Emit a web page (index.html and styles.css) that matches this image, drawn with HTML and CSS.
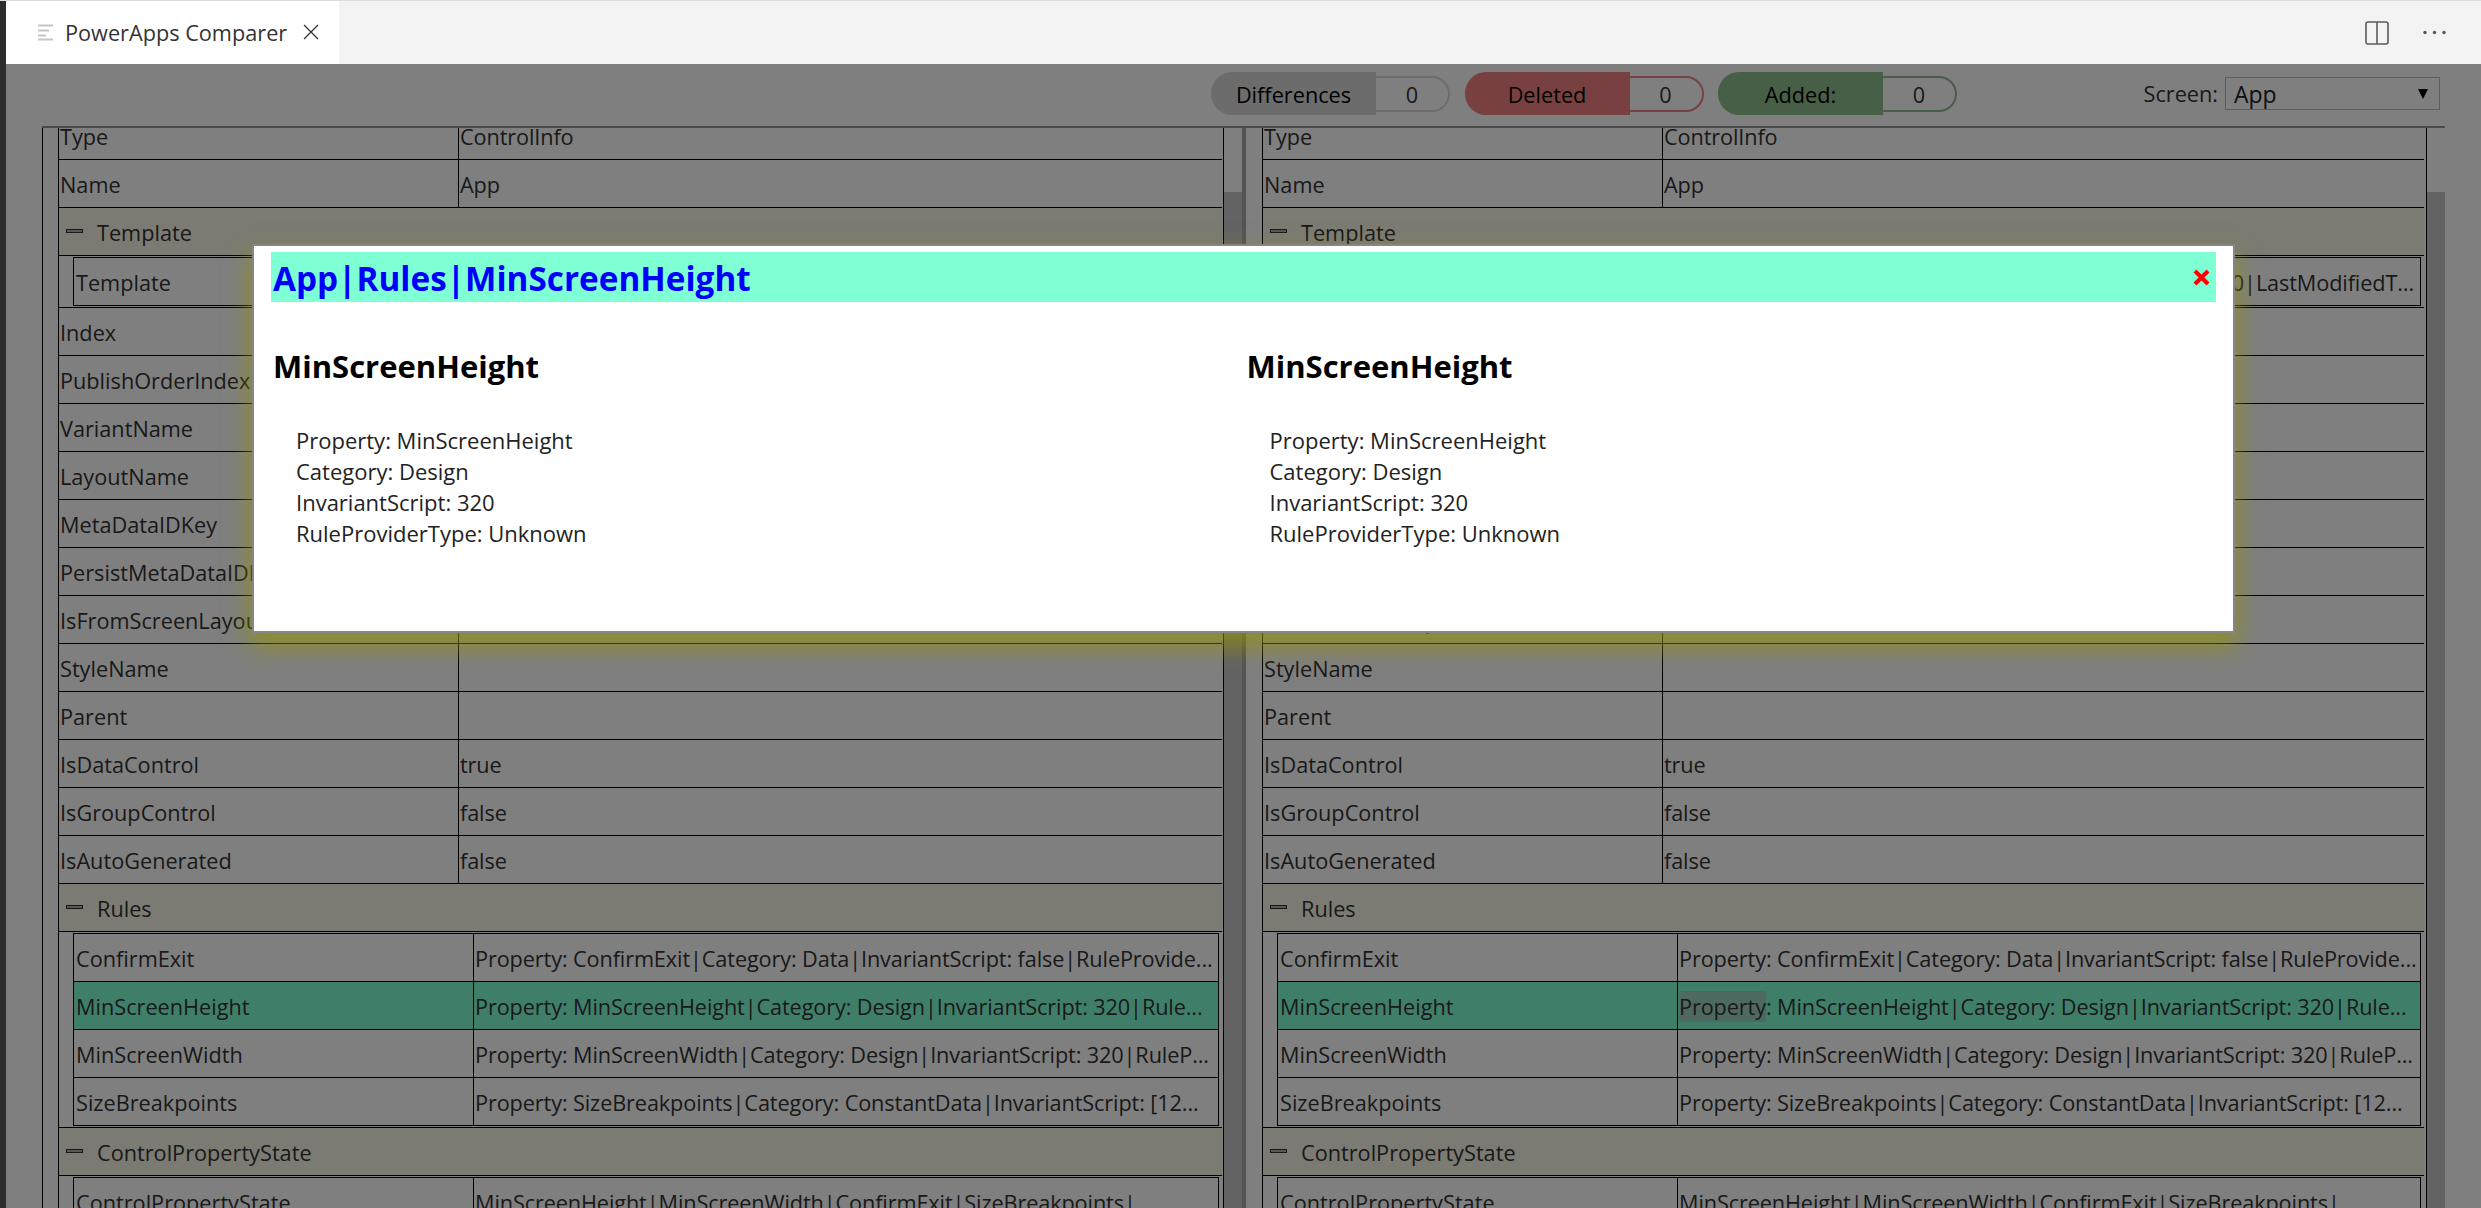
FILE: index.html

```html
<!DOCTYPE html>
<html>
  <head>
    <meta charset="UTF-8">
    <title>PowerApps Comparer</title>
    <link rel="stylesheet" href="styles.css">
  </head>
  <body>
    <div class="activity-bar"></div>
    <div class="editor">
      <div class="tab-bar">
        <div class="tab">
          <svg class="tab-icon" width="16" height="17" viewBox="0 0 16 17">
            <path d="M0 1.5H15M0 6.5H11M0 11.5H8M0 15.5H15" stroke="#c5c5c5" stroke-width="2" fill="none"/>
          </svg>
          <span class="tab-title">PowerApps Comparer</span>
          <svg class="tab-close" width="16" height="16" viewBox="0 0 16 16">
            <path d="M1 1L15 15M15 1L1 15" stroke="#333" stroke-width="1.3" fill="none"/>
          </svg>
        </div>
        <div class="tab-actions">
          <svg width="24" height="24" viewBox="0 0 24 24">
            <rect x="1" y="1" width="22" height="22" rx="2" stroke="#5a5a5a" stroke-width="1.6" fill="none"/>
            <path d="M12 1V23" stroke="#5a5a5a" stroke-width="1.6"/>
          </svg>
          <svg width="23" height="5" viewBox="0 0 23 5">
            <circle cx="2" cy="2.5" r="1.7" fill="#555"/>
            <circle cx="11.5" cy="2.5" r="1.7" fill="#555"/>
            <circle cx="21" cy="2.5" r="1.7" fill="#555"/>
          </svg>
        </div>
      </div>

      <div class="content">
        <div class="toolbar">
          <div class="counter">
            <span class="counter-label grey">Differences</span>
            <span class="counter-value grey">0</span>
          </div>
          <div class="counter">
            <span class="counter-label red">Deleted</span>
            <span class="counter-value red">0</span>
          </div>
          <div class="counter">
            <span class="counter-label green">Added:</span>
            <span class="counter-value green">0</span>
          </div>
          <div class="screen-picker">
            <span>Screen:</span>
            <div class="select">
              <span>App</span>
              <svg width="10" height="10" viewBox="0 0 10 10"><path d="M0 0H10L5 10Z" fill="#000"/></svg>
            </div>
          </div>
        </div>

        <div class="panes">
          <div class="pane">
            <div class="tree">
              <div class="tree-inner">
                <div class="row"><div class="key">Type</div><div class="val">ControlInfo</div></div>
                <div class="row"><div class="key">Name</div><div class="val">App</div></div>
                <div class="group"><i class="minus"></i><span>Template</span></div>
                <div class="nested">
                  <div class="nested-table">
                    <div class="row"><div class="key">Template</div><div class="val"></div></div>
                  </div>
                </div>
                <div class="row"><div class="key">Index</div><div class="val"></div></div>
                <div class="row"><div class="key">PublishOrderIndex</div><div class="val"></div></div>
                <div class="row"><div class="key">VariantName</div><div class="val"></div></div>
                <div class="row"><div class="key">LayoutName</div><div class="val"></div></div>
                <div class="row"><div class="key">MetaDataIDKey</div><div class="val"></div></div>
                <div class="row"><div class="key">PersistMetaDataIDKey</div><div class="val"></div></div>
                <div class="row"><div class="key">IsFromScreenLayout</div><div class="val"></div></div>
                <div class="row"><div class="key">StyleName</div><div class="val"></div></div>
                <div class="row"><div class="key">Parent</div><div class="val"></div></div>
                <div class="row"><div class="key">IsDataControl</div><div class="val">true</div></div>
                <div class="row"><div class="key">IsGroupControl</div><div class="val">false</div></div>
                <div class="row"><div class="key">IsAutoGenerated</div><div class="val">false</div></div>
                <div class="group"><i class="minus"></i><span>Rules</span></div>
                <div class="nested">
                  <div class="nested-table">
                    <div class="row"><div class="key">ConfirmExit</div><div class="val">Property: ConfirmExit|Category: Data|InvariantScript: false|RuleProvide...</div></div>
                    <div class="row active"><div class="key">MinScreenHeight</div><div class="val">Property: MinScreenHeight|Category: Design|InvariantScript: 320|Rule...</div></div>
                    <div class="row"><div class="key">MinScreenWidth</div><div class="val">Property: MinScreenWidth|Category: Design|InvariantScript: 320|RuleP...</div></div>
                    <div class="row"><div class="key">SizeBreakpoints</div><div class="val">Property: SizeBreakpoints|Category: ConstantData|InvariantScript: [12...</div></div>
                  </div>
                </div>
                <div class="group"><i class="minus"></i><span>ControlPropertyState</span></div>
                <div class="nested">
                  <div class="nested-table">
                    <div class="row"><div class="key">ControlPropertyState</div><div class="val">MinScreenHeight|MinScreenWidth|ConfirmExit|SizeBreakpoints|</div></div>
                  </div>
                </div>
              </div>
            </div>
            <div class="scrollbar first"><div class="thumb"></div></div>
          </div>

          <div class="pane second">
            <div class="tree">
              <div class="tree-inner">
                <div class="row"><div class="key">Type</div><div class="val">ControlInfo</div></div>
                <div class="row"><div class="key">Name</div><div class="val">App</div></div>
                <div class="group"><i class="minus"></i><span>Template</span></div>
                <div class="nested">
                  <div class="nested-table">
                    <div class="row"><div class="key">Template</div><div class="val end">0|LastModifiedT...</div></div>
                  </div>
                </div>
                <div class="row"><div class="key">Index</div><div class="val"></div></div>
                <div class="row"><div class="key">PublishOrderIndex</div><div class="val"></div></div>
                <div class="row"><div class="key">VariantName</div><div class="val"></div></div>
                <div class="row"><div class="key">LayoutName</div><div class="val"></div></div>
                <div class="row"><div class="key">MetaDataIDKey</div><div class="val"></div></div>
                <div class="row"><div class="key">PersistMetaDataIDKey</div><div class="val"></div></div>
                <div class="row"><div class="key">IsFromScreenLayout</div><div class="val"></div></div>
                <div class="row"><div class="key">StyleName</div><div class="val"></div></div>
                <div class="row"><div class="key">Parent</div><div class="val"></div></div>
                <div class="row"><div class="key">IsDataControl</div><div class="val">true</div></div>
                <div class="row"><div class="key">IsGroupControl</div><div class="val">false</div></div>
                <div class="row"><div class="key">IsAutoGenerated</div><div class="val">false</div></div>
                <div class="group"><i class="minus"></i><span>Rules</span></div>
                <div class="nested">
                  <div class="nested-table">
                    <div class="row"><div class="key">ConfirmExit</div><div class="val">Property: ConfirmExit|Category: Data|InvariantScript: false|RuleProvide...</div></div>
                    <div class="row active"><div class="key">MinScreenHeight</div><div class="val"><span class="word">Property</span>: MinScreenHeight|Category: Design|InvariantScript: 320|Rule...</div></div>
                    <div class="row"><div class="key">MinScreenWidth</div><div class="val">Property: MinScreenWidth|Category: Design|InvariantScript: 320|RuleP...</div></div>
                    <div class="row"><div class="key">SizeBreakpoints</div><div class="val">Property: SizeBreakpoints|Category: ConstantData|InvariantScript: [12...</div></div>
                  </div>
                </div>
                <div class="group"><i class="minus"></i><span>ControlPropertyState</span></div>
                <div class="nested">
                  <div class="nested-table">
                    <div class="row"><div class="key">ControlPropertyState</div><div class="val">MinScreenHeight|MinScreenWidth|ConfirmExit|SizeBreakpoints|</div></div>
                  </div>
                </div>
              </div>
            </div>
            <div class="scrollbar"><div class="thumb"></div></div>
          </div>
        </div>
      </div>

      <div class="overlay">
        <div class="modal">
          <div class="modal-header">
            <h1>App|Rules|MinScreenHeight</h1>
            <svg width="17" height="17" viewBox="0 0 17 17">
              <path d="M2 2L15 15M15 2L2 15" stroke="#ff0000" stroke-width="4" fill="none"/>
            </svg>
          </div>
          <div class="modal-body">
            <div class="detail">
              <h2>MinScreenHeight</h2>
              <p>Property: MinScreenHeight</p>
              <p>Category: Design</p>
              <p>InvariantScript: 320</p>
              <p>RuleProviderType: Unknown</p>
            </div>
            <div class="detail">
              <h2>MinScreenHeight</h2>
              <p>Property: MinScreenHeight</p>
              <p>Category: Design</p>
              <p>InvariantScript: 320</p>
              <p>RuleProviderType: Unknown</p>
            </div>
          </div>
        </div>
      </div>
    </div>
  </body>
</html>
```

FILE: styles.css

```css
* {
  box-sizing: border-box;
}

html, body {
  height: 100%;
}

body {
  margin: 0;
  display: flex;
  overflow: hidden;
  border-top: 1px solid #dcdcdc;
  font-family: "Open Sans", "Noto Sans", sans-serif;
  font-size: 21.7px;
  color: #333;
  background: #fff;
}

.activity-bar {
  width: 6px;
  background: #2d2d2d;
}

.editor {
  position: relative;
  flex: 1;
  min-width: 0;
  display: flex;
  flex-direction: column;
}

/* tabs */
.tab-bar {
  height: 63px;
  display: flex;
  justify-content: space-between;
  background: #f3f3f3;
}

.tab {
  width: 333px;
  display: flex;
  align-items: center;
  padding-left: 32px;
  background: #fff;
}

.tab-title {
  margin-left: 11px;
  width: 238px;
  white-space: nowrap;
}

.tab-close {
  margin-bottom: 2px;
}

.tab-actions {
  display: flex;
  align-items: center;
  gap: 34px;
  padding-right: 35px;
}

/* toolbar */
.content {
  flex: 1;
  min-height: 0;
  display: flex;
  flex-direction: column;
  padding: 0 36px;
}

.toolbar {
  height: 64px;
  flex: none;
  display: flex;
  align-items: center;
  gap: 14.5px;
  padding: 0 5px 0 1169px;
  border-bottom: 2px solid #949494;
}

.counter {
  display: flex;
  align-items: center;
  margin-top: -3px;
}

.counter-label {
  width: 165px;
  height: 43px;
  line-height: 45px;
  text-align: center;
  border-radius: 21px 0 0 21px;
  color: #000;
}

.counter-value {
  width: 74px;
  height: 36px;
  line-height: 33px;
  text-align: center;
  border: 2px solid;
  border-left: none;
  border-radius: 0 18px 18px 0;
  background: #fff;
}

.counter-label.grey { background: #d8d8d8; }
.counter-label.red { background: #f08080; }
.counter-label.green { background: #8fbc8f; }
.counter-value.grey { border-color: #d8d8d8; }
.counter-value.red { border-color: #f08080; }
.counter-value.green { border-color: #8fbc8f; }

.screen-picker {
  margin-left: auto;
  display: flex;
  align-items: center;
  gap: 7px;
  margin-top: -3px;
  line-height: 36px;
}

.select {
  width: 215px;
  height: 33px;
  display: flex;
  align-items: center;
  justify-content: space-between;
  padding: 0 11px 0 8px;
  border: 1px solid #bbb;
  color: #222;
  font-size: 23px;
}

/* two trees side by side */
.panes {
  flex: 1;
  min-height: 0;
  display: grid;
  grid-template-columns: 1204px 1fr;
}

.pane {
  display: flex;
  min-height: 0;
  overflow: hidden;
  padding-left: 15px;
  border-left: 1px solid #000;
}

.pane.second {
  border-left-color: transparent;
}

.tree {
  flex: 1;
  min-width: 0;
  overflow: hidden;
  border-left: 1px solid #000;
}

.tree-inner {
  margin-top: -16px; /* scrolled a bit */
}

.scrollbar {
  flex: none;
  width: 19px;
  margin-left: 2px;
  padding-top: 64px;
  border-left: 1px solid #000;
}

.scrollbar.first {
  width: 23px;
  margin-left: 1px;
  border-right: 4px solid #a8a8a8;
}

.thumb {
  height: 100%;
  background: #c6c6c6;
}

.row {
  height: 48px;
  display: grid;
  grid-template-columns: 400px 1fr;
  line-height: 49px;
  border-bottom: 1px solid #000;
  white-space: nowrap;
}

.row.active {
  background: #7fffd4;
}

.key {
  padding-left: 1px;
  border-right: 1px solid #000;
  overflow: hidden;
}

.val {
  padding-left: 1px;
  overflow: hidden;
  letter-spacing: -0.12px;
}

.val.end {
  text-align: right;
  padding-right: 6px;
}

.word {
  display: inline-block;
  height: 31px;
  line-height: 31px;
  background: #9cd4c0;
}

.group {
  height: 48px;
  display: flex;
  align-items: center;
  padding: 1px 0 0 7px;
  border-bottom: 1px solid #000;
  background: #f8f7e6;
}

.minus {
  width: 17px;
  height: 4px;
  margin: -3px 14px 0 0;
  border: 1px solid #333;
  background: #b0b0b0;
}

.nested {
  padding: 1px 3px 1px 14px;
  border-bottom: 1px solid #000;
}

.nested-table {
  border: 1px solid #000;
  border-bottom: none;
}

.nested .key {
  padding-left: 2px;
}

/* dialog */
.overlay {
  position: absolute;
  top: 63px;
  left: 0;
  right: 0;
  bottom: 0;
  background: rgba(0, 0, 0, 0.5);
}

.modal {
  position: absolute;
  top: 180px;
  left: 246px;
  width: 1983px;
  height: 389px;
  padding: 6px 17px;
  border: 2px solid #868686;
  background: #fff;
  color: #000;
  box-shadow: 0 12px 22px 2px rgba(150, 150, 0, 0.65);
}

.modal-header {
  height: 50px;
  display: flex;
  align-items: center;
  justify-content: space-between;
  padding: 0 6px 0 2px;
  background: #7fffd4;
}

.modal-header h1 {
  margin: 2px 0 0;
  font-size: 33.3px;
  font-weight: 700;
  color: #0000ff;
}

.modal-body {
  display: grid;
  grid-template-columns: 1fr 1fr;
  column-gap: 2px;
}

.detail {
  padding-left: 2px;
}

.detail h2 {
  margin: 42px 0 37px;
  font-size: 31px;
  line-height: 44px;
  font-weight: 700;
}

.detail p {
  margin: 0 0 0 23px;
  font-size: 22px;
  line-height: 31px;
  color: #222;
}
```
